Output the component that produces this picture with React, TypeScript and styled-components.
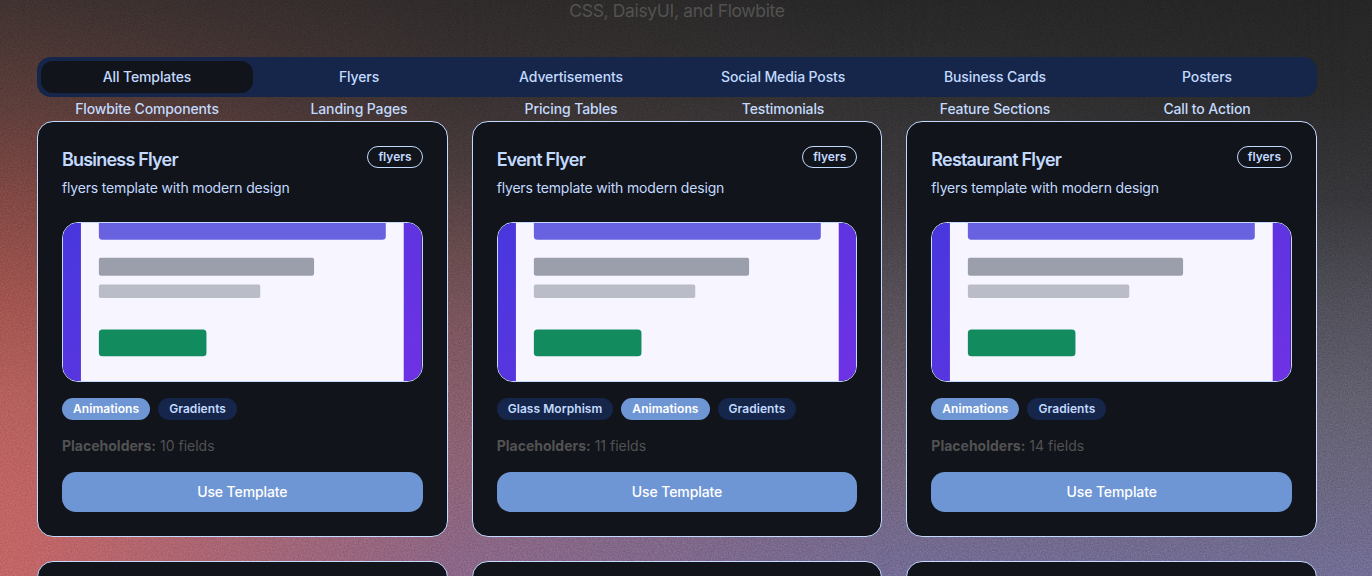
import React from "react";
import styled, { createGlobalStyle } from "styled-components";

const GlobalStyle = createGlobalStyle`
  *, *::before, *::after { box-sizing: border-box; }
  html, body { margin: 0; height: 576px; overflow: hidden; background: #272727; }
  body { font-family: Inter, "Liberation Sans", sans-serif; font-size: 14px; line-height: 20px; color: #c3dafe; }
  h3, p { margin: 0; }
  button { font: inherit; border: 0; background: none; color: inherit; padding: 0; cursor: pointer; }
`;

const Page = styled.div`
  position: relative;
  isolation: isolate;
  height: 576px;
  overflow: hidden;
  padding: 0 55px 0 37px;
`;

const Backdrop = styled.div`
  position: absolute;
  inset: 0;
  z-index: -1;
  isolation: isolate;
  background: linear-gradient(#252525 0, #2b2b2c 100px, #37373b 200px, #504f59 300px, #636070 400px, #6b6780 480px, #726d94 570px);
`;

/* One vertical wash of colour, fading out horizontally between two points. */
const Wash = styled.div<{ $stops: string; $from: number; $to: number }>`
  position: absolute;
  inset: 0;
  background: linear-gradient(${(p) => p.$stops});
  mask-image: linear-gradient(90deg, #000 ${(p) => p.$from}px, transparent ${(p) => p.$to}px);
`;

const Grain = styled.svg`
  position: absolute;
  inset: 0;
  width: 100%;
  height: 100%;
  opacity: 0.18;
  mix-blend-mode: overlay;
  pointer-events: none;
`;

const Intro = styled.p`
  height: 57px;
  text-align: center;
  color: #525252;
  font-size: 17.5px;
  line-height: 22px;
  letter-spacing: -0.34px;
`;

const Tabs = styled.div`
  display: grid;
  grid-template-columns: repeat(6, 1fr);
  grid-auto-rows: 32px;
  height: 40px;
  padding: 4px;
  border-radius: 14px;
  background: #15264a;
`;

const Tab = styled.button<{ $active?: boolean }>`
  border-radius: 12px;
  font-weight: 500;
  letter-spacing: -0.12px;
  background: ${(p) => (p.$active ? "#11141b" : "transparent")};
`;

const Grid = styled.div`
  position: relative;
  display: grid;
  grid-template-columns: repeat(3, 1fr);
  gap: 24px;
  margin-top: 24px;
`;

const Card = styled.article`
  display: flex;
  flex-direction: column;
  gap: 16px;
  height: 416px;
  padding: 24px;
  border: 1px solid #c3dafe;
  border-radius: 16px;
  background: #11141b;
`;

const CardHeader = styled.header`
  height: 60px;
`;

const TitleRow = styled.div`
  display: flex;
  justify-content: space-between;
  align-items: flex-start;
  height: 32px;
`;

const Title = styled.h3`
  font-size: 18px;
  line-height: 28px;
  font-weight: 600;
  letter-spacing: -0.8px;
`;

const Description = styled.p`
  letter-spacing: -0.17px;
`;

const Badge = styled.span<{ $tone: "outline" | "primary" | "secondary" }>`
  height: 22px;
  padding: 2px 10px;
  border: 1px solid ${(p) => (p.$tone === "outline" ? "#c3dafe" : "transparent")};
  border-radius: 11px;
  background: ${(p) => ({ outline: "transparent", primary: "#6f96d4", secondary: "#15264a" })[p.$tone]};
  color: ${(p) => (p.$tone === "primary" ? "#fff" : "#c3dafe")};
  font-size: 12px;
  line-height: 16px;
  font-weight: 600;
  letter-spacing: ${(p) => (p.$tone === "outline" ? "0" : "0.06px")};
  white-space: nowrap;
`;

const Preview = styled.div`
  height: 160px;
  overflow: hidden;
  border: 1px solid #c3dafe;
  border-radius: 16px;

  svg { display: block; width: 100%; height: 100%; }
`;

const Features = styled.div`
  display: flex;
  gap: 8px;
`;

const Fields = styled.p`
  color: #525252;
`;

const UseButton = styled.button`
  height: 40px;
  border-radius: 14px;
  background: #6f96d4;
  color: #fff;
  font-weight: 500;
  letter-spacing: -0.1px;
`;

const tabs = [
  "All Templates", "Flyers", "Advertisements", "Social Media Posts", "Business Cards", "Posters",
  "Flowbite Components", "Landing Pages", "Pricing Tables", "Testimonials", "Feature Sections", "Call to Action",
];

const templates = [
  { name: "Business Flyer", features: ["Animations", "Gradients"], fields: 10 },
  { name: "Event Flyer", features: ["Glass Morphism", "Animations", "Gradients"], fields: 11 },
  { name: "Restaurant Flyer", features: ["Animations", "Gradients"], fields: 14 },
];

const washes = [
  { from: 894, to: 1345, stops: "#272727 0, #323132 97px, #3f3b3f 200px, #575059 300px, #6a5f6f 400px, #72667f 480px, #746c96 576px" },
  { from: 460, to: 894, stops: "#302b2b 0, #3a3232 97px, #4a3c3d 170px, #674b4d 250px, #7c5660 330px, #885f6d 410px, #8d6479 480px, #8b678a 576px" },
  { from: 18, to: 460, stops: "#3f3230 0, #5b3d3a 100px, #824844 200px, #a1544f 300px, #b5605c 400px, #c06463 500px, #c36566 576px" },
];

const Thumbnail = ({ id }: { id: string }) => (
  <svg viewBox="0 0 400 300" preserveAspectRatio="xMidYMid slice" aria-hidden="true">
    <defs>
      <linearGradient id={id} x1="0" y1="0" x2="1" y2="1">
        <stop offset="0" stopColor="#4338dc" />
        <stop offset="1" stopColor="#7331e4" />
      </linearGradient>
    </defs>
    <rect width="400" height="300" fill={`url(#${id})`} />
    <rect x="20" y="20" width="360" height="260" fill="#f7f5ff" />
    <rect x="40" y="40" width="320" height="40.6" rx="4" fill="#6862e1" />
    <rect x="40" y="100.6" width="240" height="20" rx="2" fill="#9b9fab" />
    <rect x="40" y="130.6" width="180" height="15" rx="2" fill="#babcc7" />
    <rect x="40" y="180.6" width="120" height="30" rx="4" fill="#128c5f" />
  </svg>
);

export default function App() {
  return (
    <Page>
      <GlobalStyle />
      <Backdrop>
        {washes.map((w) => (
          <Wash key={w.from} $from={w.from} $to={w.to} $stops={w.stops} />
        ))}
        <Grain aria-hidden="true">
          <filter id="grain" colorInterpolationFilters="sRGB">
            <feTurbulence type="fractalNoise" baseFrequency="0.7" numOctaves="3" />
            <feColorMatrix type="matrix" values="1 0 0 0 0  1 0 0 0 0  1 0 0 0 0  0 0 0 0 1" />
          </filter>
          <rect width="100%" height="100%" filter="url(#grain)" />
        </Grain>
      </Backdrop>
      <Intro>CSS, DaisyUI, and Flowbite</Intro>
      <Tabs>
        {tabs.map((tab, i) => (
          <Tab key={tab} $active={i === 0}>{tab}</Tab>
        ))}
      </Tabs>
      <Grid>
        {templates.map((t, i) => (
          <Card key={t.name}>
            <CardHeader>
              <TitleRow>
                <Title>{t.name}</Title>
                <Badge $tone="outline">flyers</Badge>
              </TitleRow>
              <Description>flyers template with modern design</Description>
            </CardHeader>
            <Preview><Thumbnail id={`thumb-${i}`} /></Preview>
            <Features>
              {t.features.map((f) => (
                <Badge key={f} $tone={f === "Animations" ? "primary" : "secondary"}>{f}</Badge>
              ))}
            </Features>
            <Fields><strong>Placeholders:</strong> {t.fields} fields</Fields>
            <UseButton>Use Template</UseButton>
          </Card>
        ))}
        <Card /><Card /><Card />
      </Grid>
    </Page>
  );
}
